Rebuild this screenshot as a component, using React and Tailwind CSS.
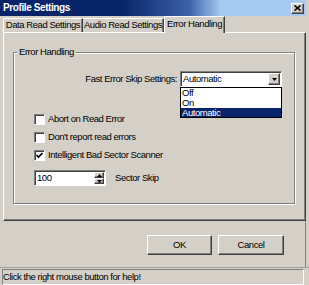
import React from "react";

const raised =
  "border border-t-white border-l-white border-r-[#404040] border-b-[#404040] shadow-[inset_-1px_-1px_0_#808080]";
const sunken =
  "border border-t-[#808080] border-l-[#808080] border-r-white border-b-white shadow-[inset_1px_1px_0_#404040]";

function Check({ checked }) {
  return (
    <div className={`w-[11px] h-[11px] bg-white ${sunken} flex items-center justify-center shrink-0`}>
      {checked && (
        <svg width="7" height="7" viewBox="0 0 7 7" className="block">
          <path d="M0.5 3 L2.5 5 L6.5 1" stroke="#000" strokeWidth="1.6" fill="none" />
        </svg>
      )}
    </div>
  );
}

function CheckRow({ label, checked }) {
  return (
    <div className="flex items-center gap-[3px] h-[12px]">
      <Check checked={checked} />
      <span>{label}</span>
    </div>
  );
}

export default function App() {
  return (
    <div
      className="w-[309px] h-[285px] bg-[#d4d0c8] text-black text-[9.5px] tracking-[-0.45px] leading-none flex flex-col overflow-hidden whitespace-nowrap"
      style={{ fontFamily: '"Liberation Sans", Arial, sans-serif' }}
    >
      {/* title bar */}
      <div className="h-[16px] w-[306px] shrink-0 flex items-center justify-between pl-[3px] pr-[2px] bg-[linear-gradient(to_right,#0a246a_0%,#0a246a_40%,#3d62ac_62%,#a6caf0_72%,#a6caf0_100%)]">
        <span className="text-white font-bold text-[10px] tracking-[-0.4px]">Profile Settings</span>
        <div className={`w-[13px] h-[11px] bg-[#d4d0c8] ${raised} flex items-center justify-center`}>
          <svg width="7" height="6" viewBox="0 0 7 6" className="block">
            <path d="M0.5 0.5 L6.5 5.5 M6.5 0.5 L0.5 5.5" stroke="#000" strokeWidth="1.6" />
          </svg>
        </div>
      </div>

      {/* tabs */}
      <div className="h-[16px] shrink-0 flex items-end pl-[3px] relative z-10">
        <div className="h-[14px] w-[80px] border-t border-l border-t-white border-l-white border-r border-r-[#404040] shadow-[inset_-1px_0_0_#808080] rounded-tl-[2px] flex items-center justify-center pb-[1px]">
          Data Read Settings
        </div>
        <div className="h-[14px] w-[81px] border-t border-t-white border-r border-r-[#404040] shadow-[inset_-1px_0_0_#808080] flex items-center justify-center pb-[1px]">
          Audio Read Settings
        </div>
        <div className="h-[17px] w-[61px] -mb-[1px] bg-[#d4d0c8] border-t border-l border-t-white border-l-white border-r border-r-[#404040] shadow-[inset_-1px_0_0_#808080] rounded-tl-[2px] flex items-center justify-center pb-[2px]">
          Error Handling
        </div>
      </div>

      {/* tab panel */}
      <div className="ml-[3px] w-[303px] h-[189px] shrink-0 border border-t-white border-l-white border-r-[#404040] border-b-[#404040] shadow-[inset_-1px_-1px_0_#808080] pt-[13px] pl-[9px]">
        <fieldset className="relative w-[282px] h-[158px] border border-[#808080] shadow-[1px_1px_0_#fff,inset_1px_1px_0_#fff] px-0 pt-0 m-0">
          <legend className="ml-[3px] px-[2px] bg-[#d4d0c8] leading-[12px]">Error Handling</legend>

          <div className="flex items-center justify-end pr-[12px] mt-[13px] gap-[3px]">
            <span>Fast Error Skip Settings:</span>
            <div className="relative">
              <div className={`w-[102px] h-[16px] bg-white ${sunken} flex items-center justify-between pl-[2px] pr-[1px]`}>
                <span>Automatic</span>
                <div className={`w-[12px] h-[12px] bg-[#d4d0c8] ${raised} flex items-center justify-center`}>
                  <svg width="5" height="3" viewBox="0 0 5 3" className="block">
                    <path d="M0 0 H5 L2.5 3 Z" fill="#000" />
                  </svg>
                </div>
              </div>
              <div className="absolute left-0 top-[16px] w-[102px] h-[31px] bg-white border border-black flex flex-col">
                <div className="h-[10px] pl-[1px] leading-[9px] overflow-hidden">Off</div>
                <div className="h-[10px] pl-[1px] leading-[9px] overflow-hidden">On</div>
                <div className="h-[9px] pl-[1px] leading-[9px] overflow-hidden bg-[#0a246a] text-white">Automatic</div>
              </div>
            </div>
          </div>

          <div className="flex flex-col pl-[20px] mt-[26px] gap-[6px]">
            <CheckRow label="Abort on Read Error" />
            <CheckRow label="Don't report read errors" />
            <CheckRow label="Intelligent Bad Sector Scanner" checked />
          </div>

          <div className="flex items-center pl-[20px] mt-[9px] gap-[9px]">
            <div className={`w-[72px] h-[16px] bg-white ${sunken} flex items-center justify-between pl-[2px] pr-[1px]`}>
              <span>100</span>
              <div className="w-[10px] h-[12px] flex flex-col">
                <div className={`h-[6px] bg-[#d4d0c8] ${raised} flex items-center justify-center`}>
                  <svg width="5" height="3" viewBox="0 0 5 3" className="block">
                    <path d="M0 3 H5 L2.5 0 Z" fill="#000" />
                  </svg>
                </div>
                <div className={`h-[6px] bg-[#d4d0c8] ${raised} flex items-center justify-center`}>
                  <svg width="5" height="3" viewBox="0 0 5 3" className="block">
                    <path d="M0 0 H5 L2.5 3 Z" fill="#000" />
                  </svg>
                </div>
              </div>
            </div>
            <span>Sector Skip</span>
          </div>
        </fieldset>
      </div>

      {/* buttons */}
      <div className="h-[46px] w-[306px] shrink-0 flex items-start justify-end gap-[6px] pt-[14px] pr-[21px] border-r border-r-[#808080]">
        <button className={`w-[65px] h-[20px] bg-[#d4d0c8] ${raised} flex items-center justify-center`}>OK</button>
        <button className={`w-[66px] h-[20px] bg-[#d4d0c8] ${raised} flex items-center justify-center`}>Cancel</button>
      </div>

      {/* status bar */}
      <div className="flex-1 border-t border-t-[#a0a0a0] pt-[1px] px-[2px]">
        <div className="h-[16px] w-[302px] border border-t-[#808080] border-l-[#808080] border-r-white border-b-white flex items-center">
          Click the right mouse button for help!
        </div>
      </div>
    </div>
  );
}
